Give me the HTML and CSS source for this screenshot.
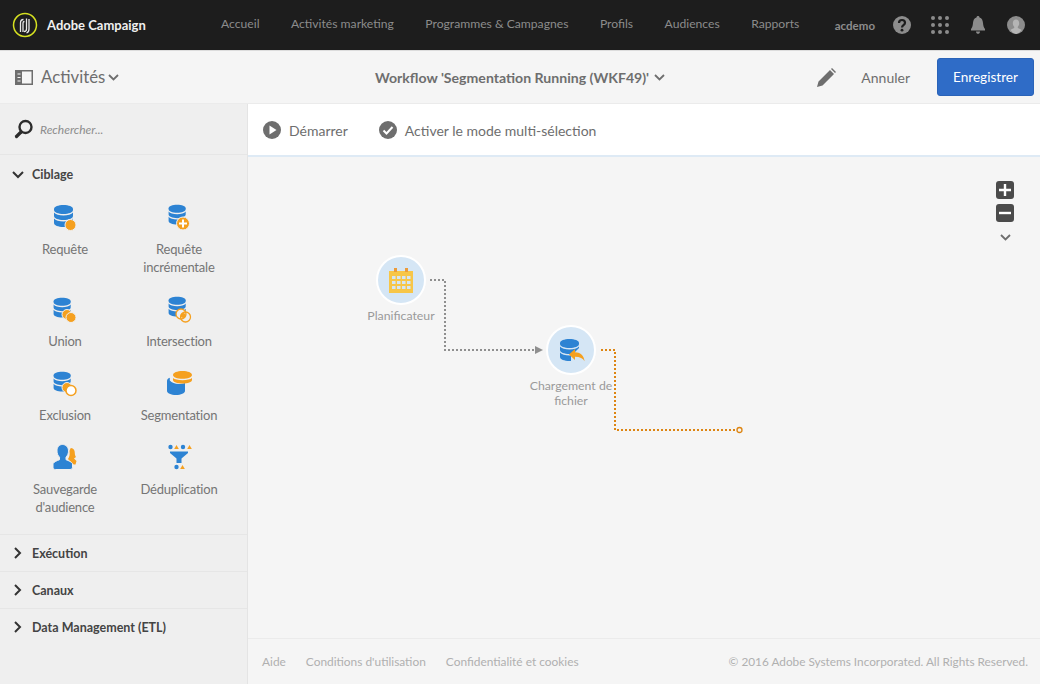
FILE: index.html
```html
<!DOCTYPE html>
<html lang="fr">
<head>
  <meta charset="UTF-8" />
  <title>Adobe Campaign</title>
  <link rel="stylesheet" href="styles.css">
</head>
<body>
  <svg class="defs" width="0" height="0">
    <defs>
      <g id="db">
        <path fill="#2d83d3" d="M4 7c0-2.400 4.300-4 9.500-4S23 4.600 23 7v1c0 2.400-4.300 4-9.500 4S4 10.400 4 8z"/>
        <path fill="#2d83d3" d="M4 10.500c1.500 1.900 5.200 3 9.500 3s8-1.100 9.500-3V14c0 2.400-4.300 4-9.500 4S4 16.400 4 14z"/>
        <path fill="#2d83d3" d="M4 16.500c1.500 1.900 5.200 3 9.500 3s8-1.100 9.500-3V21c0 2.400-4.300 4-9.500 4S4 23.400 4 21z"/>
      </g>
    </defs>
  </svg>

  <header class="topbar">
    <div class="brand">
      <svg width="26" height="26" viewBox="0 0 26 26">
        <circle cx="13" cy="13" r="11.500" fill="none" stroke="#d5e021" stroke-width="1.500"/>
        <path fill="none" stroke="#e8e8e8" stroke-width="1.300" d="M8.500 20V11c0-2 1.200-3.500 3-3.500M11 20v-9c0-1 .6-1.500 1.500-1.500M14.500 6.500V17c0 1.500-1 2.500-2.500 2.500M17 7v10c0 2-1 3.500-2.500 4"/>
      </svg>
      <span class="brand-name">Adobe Campaign</span>
    </div>
    <nav class="topnav">
      <a>Accueil</a>
      <a>Activités marketing</a>
      <a>Programmes &amp; Campagnes</a>
      <a>Profils</a>
      <a>Audiences</a>
      <a>Rapports</a>
    </nav>
    <div class="user-area">
      <span class="username">acdemo</span>
      <svg width="18" height="18" viewBox="0 0 18 18">
        <circle cx="9" cy="9" r="9" fill="#8c8c8c"/>
        <path fill="none" stroke="#1d1d1d" stroke-width="2.200" d="M6 7c0-2 1.300-3 3-3s3 1 3 2.800c0 2.400-3 2.400-3 4.700"/>
        <circle cx="9" cy="14.200" r="1.400" fill="#1d1d1d"/>
      </svg>
      <svg width="18" height="18" viewBox="0 0 18 18" fill="#8c8c8c">
        <circle cx="2" cy="2" r="2"/><circle cx="9" cy="2" r="2"/><circle cx="16" cy="2" r="2"/>
        <circle cx="2" cy="9" r="2"/><circle cx="9" cy="9" r="2"/><circle cx="16" cy="9" r="2"/>
        <circle cx="2" cy="16" r="2"/><circle cx="9" cy="16" r="2"/><circle cx="16" cy="16" r="2"/>
      </svg>
      <svg class="bell" width="14" height="18" viewBox="0 0 14 18" fill="#8c8c8c">
        <path d="M7 0c1 0 1.500.6 1.500 1.500C11 2.300 11.800 4.500 12 7c.2 3 1 4.800 2 6v1.500H0V13c1-1.200 1.800-3 2-6 .2-2.500 1-4.700 3.500-5.500C5.500.6 6 0 7 0z"/>
        <path d="M5 15.500h4c0 1.500-1 2.300-2 2.300s-2-.8-2-2.300z"/>
      </svg>
      <svg width="18" height="18" viewBox="0 0 18 18">
        <circle cx="9" cy="9" r="9" fill="#8c8c8c"/>
        <path fill="#b5b5b5" d="M9 3.500c2 0 3.200 1.500 3.200 3.700 0 1.500-.6 2.800-1.400 3.500v1.200c1.500.6 3 1.200 3.900 2.200A9 9 0 0 1 9 18a9 9 0 0 1-5.700-3.900c.9-1 2.400-1.600 3.900-2.200v-1.200c-.8-.7-1.400-2-1.400-3.500C5.800 5 7 3.500 9 3.500z"/>
      </svg>
    </div>
  </header>

  <div class="toolbar">
    <div class="panel-toggle">
      <svg width="18" height="15" viewBox="0 0 18 15">
        <rect x=".75" y=".75" width="16.500" height="13.500" fill="none" stroke="#6e6e6e" stroke-width="1.500"/>
        <rect x="1" y="1" width="6" height="13" fill="#6e6e6e"/>
        <path stroke="#f5f5f5" stroke-width="1.200" d="M2.500 4h3M2.500 7.500h3M2.500 11h3"/>
      </svg>
      <span class="panel-title">Activités</span>
      <svg class="caret" width="11" height="7" viewBox="0 0 11 7"><path fill="none" stroke="#6e6e6e" stroke-width="1.800" d="M1 1l4.500 4.500L10 1"/></svg>
    </div>
    <div class="wf-title">
      <span>Workflow 'Segmentation Running (WKF49)'</span>
      <svg width="11" height="7" viewBox="0 0 11 7"><path fill="none" stroke="#6e6e6e" stroke-width="1.800" d="M1 1l4.500 4.500L10 1"/></svg>
    </div>
    <div class="toolbar-actions">
      <svg width="19" height="19" viewBox="0 0 19 19"><path fill="#6e6e6e" d="M0 19l1.500-5.500L13 2l4 4L5.500 17.500zM14 1l1-1 4 4-1 1z"/></svg>
      <span class="cancel">Annuler</span>
      <button class="save-btn">Enregistrer</button>
    </div>
  </div>

  <div class="main">
    <aside class="sidebar">
      <div class="search">
        <svg width="20" height="20" viewBox="0 0 20 20">
          <circle cx="11.500" cy="8" r="6" fill="none" stroke="#2c2c2c" stroke-width="2.400"/>
          <path stroke="#2c2c2c" stroke-width="3.200" stroke-linecap="round" d="M7 13l-4.500 4.500"/>
        </svg>
        <span class="search-hint">Rechercher...</span>
      </div>

      <div class="section-head open">
        <svg width="12" height="8" viewBox="0 0 12 8"><path fill="none" stroke="#333" stroke-width="2" d="M1 1l5 5 5-5"/></svg>
        <span>Ciblage</span>
      </div>

      <div class="activity-grid">
        <div class="activity">
          <svg width="30" height="30" viewBox="0 0 30 30"><use href="#db"/><circle cx="20.500" cy="23" r="5.500" fill="#f5a01f" stroke="#efefef"/></svg>
          <span>Requête</span>
        </div>
        <div class="activity">
          <svg width="30" height="30" viewBox="0 0 30 30"><g transform="translate(1 0) scale(.9)"><use href="#db"/></g><circle cx="19" cy="21.500" r="6.500" fill="#f5a01f" stroke="#efefef"/><path stroke="#fff" stroke-width="2" d="M15 21.500h8M19 17.500v8"/></svg>
          <span>Requête<br>incrémentale</span>
        </div>
        <div class="activity">
          <svg width="30" height="30" viewBox="0 0 30 30"><g transform="translate(0 1) scale(.9)"><use href="#db"/></g><circle cx="17" cy="20.500" r="5" fill="#f5a01f" stroke="#efefef"/><circle cx="21" cy="23.500" r="5" fill="#f5a01f" stroke="#efefef"/></svg>
          <span>Union</span>
        </div>
        <div class="activity">
          <svg width="30" height="30" viewBox="0 0 30 30"><g transform="translate(1 0) scale(.9)"><use href="#db"/></g><circle cx="17" cy="20" r="5" fill="#efefef" stroke="#f5a01f" stroke-width="1.300"/><circle cx="21.500" cy="23" r="5" fill="none" stroke="#f5a01f" stroke-width="1.300"/><circle cx="19.300" cy="21.500" r="2.500" fill="#f5a01f"/></svg>
          <span>Intersection</span>
        </div>
        <div class="activity">
          <svg width="30" height="30" viewBox="0 0 30 30"><g transform="translate(0 1) scale(.9)"><use href="#db"/></g><circle cx="17" cy="19.500" r="5" fill="#f5a01f" stroke="#efefef"/><circle cx="21" cy="22.500" r="5" fill="#fff" stroke="#f5a01f" stroke-width="1.500"/></svg>
          <span>Exclusion</span>
        </div>
        <div class="activity">
          <svg width="30" height="30" viewBox="0 0 30 30">
            <path fill="#2d83d3" d="M3 13c0-1.500 1-2.600 2.800-3.300v2.800c2 2 5 3.500 9 3.500 2.500 0 4.500-.4 6.200-1V23c0 2.200-4 4-9 4s-9-1.800-9-4z"/>
            <path fill="#f5a01f" d="M9 7c0-2.400 4.200-4 9.500-4S28 4.600 28 7s-4.200 3.800-9.500 3.800S9 9.400 9 7zM9 10c1.600 1.400 5 2.200 9.500 2.200S26.400 11.400 28 10v2c0 2-4.200 3.500-9.500 3.500S9 14 9 12z"/>
          </svg>
          <span>Segmentation</span>
        </div>
        <div class="activity">
          <svg width="30" height="30" viewBox="0 0 30 30">
            <path fill="#f5a01f" d="M21 6c2.500 0 3.800 2.200 3.800 5 0 1.600.5 3 1.200 4l-2 1.500 2.500 2.500-1 3.500c-1.500 0-3-.5-4-1.500l-3.500-4c1.500-2 2-5 1.500-8 .5-1.600 1-3 1.500-3z"/>
            <path fill="#2d83d3" stroke="#efefef" d="M12.500 2.500c3.500 0 6 2.700 6 6.500 0 2.500-1 4.800-2.500 6.200v2.500c2.500 1 5.500 2 6.500 4v3.500c0 1.500-1 2.300-2.500 2.300H5.500C4 27.500 3 26.700 3 25.200v-3.500c1-2 4-3 6.500-4v-2.500C8 13.800 7 11.500 7 9c0-3.800 2-6.500 5.500-6.500z"/>
          </svg>
          <span>Sauvegarde<br>d'audience</span>
        </div>
        <div class="activity">
          <svg width="30" height="30" viewBox="0 0 30 30">
            <circle cx="6.500" cy="5" r="2.200" fill="#2d83d3"/><path fill="#f5a01f" d="M12.500 3l2.300 4h-4.600z"/>
            <circle cx="19" cy="5" r="2.200" fill="#2d83d3"/><path fill="#f5a01f" d="M25.500 3l2.300 4h-4.600z"/>
            <path fill="#2d83d3" d="M6 9.500h18V11l-6.500 5.500V21h-5v-4.500L6 11z"/>
            <circle cx="12.500" cy="25" r="2.200" fill="#2d83d3"/><path fill="#f5a01f" d="M18.500 23l2.300 4h-4.600z"/>
          </svg>
          <span>Déduplication</span>
        </div>
      </div>

      <div class="section-head">
        <svg width="8" height="12" viewBox="0 0 8 12"><path fill="none" stroke="#333" stroke-width="2" d="M1 1l5 5-5 5"/></svg>
        <span>Exécution</span>
      </div>
      <div class="section-head">
        <svg width="8" height="12" viewBox="0 0 8 12"><path fill="none" stroke="#333" stroke-width="2" d="M1 1l5 5-5 5"/></svg>
        <span>Canaux</span>
      </div>
      <div class="section-head">
        <svg width="8" height="12" viewBox="0 0 8 12"><path fill="none" stroke="#333" stroke-width="2" d="M1 1l5 5-5 5"/></svg>
        <span>Data Management (ETL)</span>
      </div>
    </aside>

    <section class="workspace">
      <div class="ws-tools">
        <div class="ws-tool">
          <svg width="18" height="18" viewBox="0 0 18 18"><circle cx="9" cy="9" r="9" fill="#6e6e6e"/><path fill="#fff" d="M6.500 4.500l7 4.500-7 4.500z"/></svg>
          <span>Démarrer</span>
        </div>
        <div class="ws-tool">
          <svg width="18" height="18" viewBox="0 0 18 18"><circle cx="9" cy="9" r="9" fill="#6e6e6e"/><path fill="none" stroke="#fff" stroke-width="2" d="M4.500 9.500l3 3 6-6.500"/></svg>
          <span>Activer le mode multi-sélection</span>
        </div>
      </div>

      <div class="canvas">
        <svg class="links" width="792" height="482" viewBox="0 0 792 482">
          <path fill="none" stroke="#8f8f8f" stroke-width="2" stroke-dasharray="2 2" d="M182 123h15v70h90"/>
          <path fill="#8f8f8f" d="M287 189l8 4-8 4z"/>
          <path fill="none" stroke="#dd8512" stroke-width="2" stroke-dasharray="2 2" d="M353 193h14v80h121"/>
          <circle cx="491.500" cy="273" r="2.500" fill="#f5f5f5" stroke="#dd8512" stroke-width="1.300"/>
        </svg>

        <div class="node node-planner">
          <div class="node-icon">
            <svg width="26" height="26" viewBox="0 0 26 26">
              <path fill="#f7c648" d="M1 4h5V2h3v2h8V2h3v2h5v22H1z"/>
              <g fill="#d5e6f5">
                <rect x="4" y="9" width="3.500" height="3"/><rect x="9" y="9" width="3.500" height="3"/><rect x="14" y="9" width="3.500" height="3"/><rect x="19" y="9" width="3.500" height="3"/>
                <rect x="4" y="14" width="3.500" height="3"/><rect x="9" y="14" width="3.500" height="3"/><rect x="14" y="14" width="3.500" height="3"/><rect x="19" y="14" width="3.500" height="3"/>
                <rect x="4" y="19" width="3.500" height="3"/><rect x="9" y="19" width="3.500" height="3"/><rect x="14" y="19" width="3.500" height="3"/><rect x="19" y="19" width="3.500" height="3"/>
              </g>
              <path fill="#eb9a3a" d="M6 1h3v4H6zM17 1h3v4h-3z"/>
            </svg>
          </div>
          <div class="node-label">Planificateur</div>
        </div>

        <div class="node node-load">
          <div class="node-icon">
            <svg width="30" height="30" viewBox="0 0 30 30">
              <use href="#db" transform="translate(0 1)"/>
              <path fill="#d5e6f5" d="M15 21l8-8 7 7v8H15z"/>
              <path fill="#f5a01f" d="M13 19.500l6-5.500v3.300c5 0 9 2.700 9.500 9-1.500-3-4.500-4.500-9.500-4.500V25z"/>
            </svg>
          </div>
          <div class="node-label">Chargement de fichier</div>
        </div>

        <div class="zoom-tools">
          <div class="zoom-btn"><svg width="12" height="12" viewBox="0 0 12 12"><path stroke="#fff" stroke-width="2.400" d="M0 6h12M6 0v12"/></svg></div>
          <div class="zoom-btn"><svg width="12" height="12" viewBox="0 0 12 12"><path stroke="#fff" stroke-width="2.400" d="M0 6h12"/></svg></div>
          <svg class="zoom-caret" width="11" height="7" viewBox="0 0 11 7"><path fill="none" stroke="#6e6e6e" stroke-width="1.800" d="M1 1l4.500 4.500L10 1"/></svg>
        </div>
      </div>

      <footer class="footer">
        <a>Aide</a>
        <a>Conditions d'utilisation</a>
        <a>Confidentialité et cookies</a>
        <span class="copyright">© 2016 Adobe Systems Incorporated. All Rights Reserved.</span>
      </footer>
    </section>
  </div>
</body>
</html>
```

FILE: styles.css
```css
* {
  box-sizing: border-box;
}
html, body {
  height: 100%;
}
body {
  margin: 0;
  font-family: 'Lato', sans-serif;
  font-size: 14px;
  color: #6e6e6e;
  background-color: #f5f5f5;
  overflow: hidden;
  display: flex;
  flex-direction: column;
}
svg {
  display: block;
  flex: none;
}
.defs {
  position: absolute;
}

/* Top bar */
.topbar {
  height: 50px;
  background-color: #1d1d1d;
  display: flex;
  align-items: center;
  flex: none;
}
.brand {
  width: 221px;
  padding-left: 12px;
  display: flex;
  align-items: center;
  gap: 9px;
}
.brand-name {
  color: #f0f0f0;
  font-size: 13px;
  font-weight: 700;
}
.topnav {
  display: flex;
  gap: 31.500px;
  padding-bottom: 3px;
  font-size: 12.150px;
  color: #8c8c8c;
  white-space: nowrap;
}
.user-area {
  margin-left: auto;
  padding-right: 15px;
  display: flex;
  align-items: center;
  gap: 20px;
}
.username {
  font-size: 11.500px;
  font-weight: 700;
  color: #8c8c8c;
  margin-right: -2px;
}
.bell {
  margin: 0 2px;
}

/* Toolbar */
.toolbar {
  height: 54px;
  flex: none;
  padding: 0 6px 0 15px;
  display: flex;
  align-items: center;
  border-top: 1px solid #dcdcdc;
  border-bottom: 1px solid #ebebeb;
}
.panel-toggle {
  width: 360px;
  display: flex;
  align-items: center;
}
.panel-title {
  font-size: 16.800px;
  margin-left: 8px;
  margin-right: 3px;
  padding-bottom: 2px;
}
.wf-title {
  display: flex;
  align-items: center;
  gap: 5px;
  font-size: 14.100px;
  font-weight: 700;
}
.toolbar-actions {
  margin-left: auto;
  display: flex;
  align-items: center;
}
.cancel {
  font-size: 14px;
  margin-left: 25px;
  margin-right: 27px;
}
.save-btn {
  width: 97px;
  height: 38px;
  border: 1px solid #2a63b8;
  border-radius: 3px;
  background-color: #2f6cc7;
  color: #fff;
  font-family: inherit;
  font-size: 13.600px;
}

/* Sidebar */
.main {
  flex: 1;
  display: flex;
  min-height: 0;
}
.sidebar {
  width: 248px;
  flex: none;
  background-color: #efefef;
  border-right: 1px solid #e4e4e4;
}
.search {
  height: 51px;
  padding-left: 14px;
  display: flex;
  align-items: center;
  gap: 6px;
  border-bottom: 1px solid #e6e6e6;
}
.search-hint {
  font-size: 12px;
  font-style: italic;
  color: #8c8c8c;
}
.section-head {
  height: 37px;
  padding-left: 14px;
  display: flex;
  align-items: center;
  gap: 10px;
  font-size: 12.500px;
  font-weight: 700;
  color: #444;
  border-top: 1px solid #e6e6e6;
}
.section-head svg {
  width: 8px;
}
.section-head.open {
  border-top: 0;
  padding-top: 2px;
}
.section-head.open svg {
  width: 12px;
  margin-left: -2px;
}
.section-head.open span {
  margin-left: -2px;
}
.activity-grid {
  padding: 10px 11px 0 8px;
  display: grid;
  grid-template-columns: 114px 114px;
  grid-auto-rows: auto;
}
.activity {
  display: flex;
  flex-direction: column;
  align-items: center;
  padding-bottom: 18px;
  text-align: center;
  font-size: 13px;
  letter-spacing: -0.200px;
  line-height: 18px;
  color: #757575;
}
.activity svg {
  margin-bottom: 8px;
}

/* Workspace */
.workspace {
  flex: 1;
  min-width: 0;
  display: flex;
  flex-direction: column;
}
.ws-tools {
  height: 53px;
  flex: none;
  background-color: #fff;
  border-bottom: 2px solid #deeaf5;
  padding-left: 15px;
  display: flex;
  align-items: center;
  gap: 31px;
  font-size: 14px;
}
.ws-tool {
  display: flex;
  align-items: center;
  gap: 8px;
}
.ws-tool span {
  padding-top: 2px;
}
.canvas {
  flex: 1;
  position: relative;
}
.links {
  position: absolute;
  left: 0;
  top: 0;
}
.node {
  position: absolute;
  width: 90px;
  display: flex;
  flex-direction: column;
  align-items: center;
  text-align: center;
  font-size: 12.300px;
  line-height: 15px;
  color: #9a9a9a;
}
.node-planner {
  left: 108px;
  top: 98px;
}
.node-load {
  left: 278px;
  top: 168px;
}
.node-icon {
  width: 50px;
  height: 50px;
  border-radius: 50%;
  background-color: #d5e6f5;
  border: 2px solid #fff;
  display: flex;
  align-items: center;
  justify-content: center;
  margin-bottom: 3px;
}
.zoom-tools {
  position: absolute;
  right: 26px;
  top: 24px;
  display: flex;
  flex-direction: column;
  align-items: center;
  gap: 5px;
}
.zoom-btn {
  width: 18px;
  height: 18px;
  border-radius: 3px;
  background-color: #4b4b4b;
  display: flex;
  align-items: center;
  justify-content: center;
}
.zoom-caret {
  margin-top: 7px;
}

/* Footer */
.footer {
  height: 46px;
  flex: none;
  padding: 0 12px 0 14px;
  display: flex;
  align-items: center;
  gap: 20px;
  font-size: 11.900px;
  color: #b0b0b0;
  border-top: 1px solid #ebebeb;
}
.copyright {
  margin-left: auto;
  font-size: 11.800px;
}
```
